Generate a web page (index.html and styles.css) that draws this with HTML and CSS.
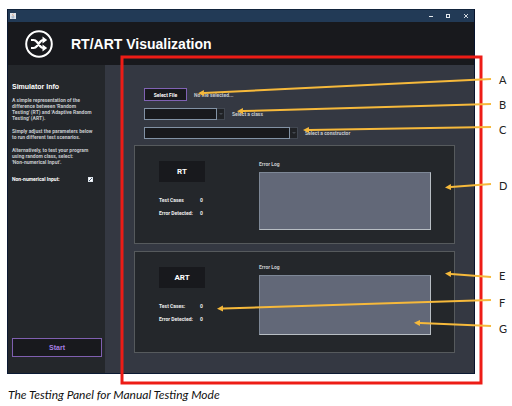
FILE: index.html
```html
<!DOCTYPE html>
<html lang="en">
<head>
<meta charset="utf-8">
<title>RT/ART Visualization</title>
<link rel="stylesheet" href="styles.css">
</head>
<body>
<figure class="figure">
  <div class="window">
    <div class="titlebar">
      <svg class="app-icon" viewBox="0 0 6 6"><rect width="6" height="6" fill="#dfe3e8"/><path d="M3.4 .6Q2.2 1.6 3 2.4T3 3.4" fill="none" stroke="#c9805c" stroke-width=".7"/><path d="M1.4 3.8H4.4M1.8 4.9H4.2" stroke="#6e8fb5" stroke-width=".6"/></svg>
      <svg class="window-controls" viewBox="0 0 42 8" fill="none" stroke="#e4e9ee"><path d="M1 4.500H5"/><rect x="18.500" y="2.500" width="3" height="3"/><path d="M36 2L40 6M40 2L36 6" stroke-width=".9"/></svg>
    </div>
    <header class="header">
      <svg class="logo" viewBox="0 0 28 28" fill="none" stroke="#fff">
        <circle cx="14" cy="14" r="12.800" stroke-width="2"/>
        <path d="M6 10H8.500Q10.500 10 12 12L15 16Q16.500 18 18.500 18H19M6 18H8.500Q10.500 18 12 16L15 12Q16.500 10 18.500 10H19" stroke-width="2.200"/>
        <path d="M17.500 6.500L22.200 10L17.500 13.500ZM17.500 14.500L22.200 18L17.500 21.500Z" fill="#fff" stroke="none"/>
      </svg>
      <h1 class="title">RT/ART Visualization</h1>
    </header>
    <div class="body">
      <aside class="sidebar">
        <h2 class="side-title">Simulator Info</h2>
        <p>A simple representation of the<br>difference between 'Random<br>Testing' (RT) and 'Adaptive Random<br>Testing' (ART).</p>
        <p>Simply adjust the parameters below<br>to run different test scenarios.</p>
        <p>Alternatively, to test your program<br>using random class, select:<br>'Non-numerical Input'.</p>
        <div class="check-row">
          <label for="non-numerical">Non-numerical Input:</label>
          <input class="check" id="non-numerical" type="checkbox" checked>
        </div>
        <button class="start" type="button">Start</button>
      </aside>
      <main class="main">
        <div class="controls">
          <div class="row"><button class="select-file" type="button">Select File</button><span>No file selected...</span></div>
          <div class="row">
            <div class="combo class-combo"><select id="class"></select><i class="arrow"></i></div>
            <label for="class">Select a class</label>
          </div>
          <div class="row">
            <div class="combo constructor-combo"><select id="constructor"></select><i class="arrow"></i></div>
            <label for="constructor">Select a constructor</label>
          </div>
        </div>
        <section class="panel">
          <div class="stats">
            <h3 class="badge">RT</h3>
            <dl><dt>Test Cases</dt><dd>0</dd><dt>Error Detected:</dt><dd>0</dd></dl>
          </div>
          <div class="log"><label for="rt-log">Error Log</label><textarea id="rt-log" readonly></textarea></div>
        </section>
        <section class="panel">
          <div class="stats">
            <h3 class="badge">ART</h3>
            <dl><dt>Test Cases:</dt><dd>0</dd><dt>Error Detected:</dt><dd>0</dd></dl>
          </div>
          <div class="log tall"><label for="art-log">Error Log</label><textarea id="art-log" readonly></textarea></div>
        </section>
      </main>
    </div>
  </div>
  <figcaption class="caption">The Testing Panel for Manual Testing Mode</figcaption>
  <svg class="annotations" viewBox="0 0 512 406">
    <defs>
      <marker id="head" markerUnits="userSpaceOnUse" markerWidth="7" markerHeight="7" refX="0" refY="3" orient="auto-start-reverse"><path d="M0 0L6 3L0 6Z" fill="#f6b93b"/></marker>
    </defs>
    <rect class="highlight" x="122" y="57" width="359" height="326"/>
    <g class="leaders">
      <path d="M204 93L491 79"/>
      <path d="M243 111L491 104"/>
      <path d="M309 130L491 127"/>
      <path d="M451 187L491 184"/>
      <path d="M451 274L491 277"/>
      <path d="M223 308.500L491 300"/>
      <path d="M420 323L491 326"/>
    </g>
    <g class="letters">
      <text x="499" y="84">A</text>
      <text x="499" y="109">B</text>
      <text x="499" y="134">C</text>
      <text x="499" y="190">D</text>
      <text x="499" y="280">E</text>
      <text x="499" y="307">F</text>
      <text x="499" y="333">G</text>
    </g>
  </svg>
</figure>
</body>
</html>
```
FILE: styles.css
```css
* { box-sizing: border-box; }
body { margin: 0; background: #fff; }
h1, h2, h3, p, dl, dd { margin: 0; }
button, select, textarea { font: inherit; border-radius: 0; margin: 0; }

.figure { position: relative; margin: 0; padding: 9px 37px 0 7px; }
.window {
  color: #c6c9cd;
  background: #343842;
  font: bold 5px/6px Roboto, sans-serif;
  border: 1px solid #0b1a33;
  border-top: 0;
  border-right-color: #07122b;
}
.titlebar {
  display: flex;
  align-items: center;
  justify-content: space-between;
  height: 13px;
  padding: 0 4px 0 2px;
  background: #223a56;
  border-top: 1px solid #12243c;
}
.app-icon { width: 6px; height: 6px; }
.window-controls { width: 42px; height: 8px; }
.header {
  display: flex;
  align-items: center;
  gap: 18px;
  height: 43px;
  padding-left: 17px;
  background: #18191d;
}
.logo { width: 28px; height: 28px; }
.title { color: #fff; font: bold 14px/20px "Liberation Sans", sans-serif; }

.body { display: flex; }
.sidebar {
  display: flex;
  flex-direction: column;
  flex: 0 0 97px;
  padding: 17px 3px 16px 4px;
  background: #24272b;
  white-space: nowrap;
}
.side-title { margin-bottom: 5px; color: #fff; font: bold 7px/10px "Liberation Sans", sans-serif; }
.sidebar p { margin-bottom: 7px; }
.check-row {
  display: flex;
  align-items: center;
  justify-content: space-between;
  margin-top: 4px;
  padding-right: 9px;
  color: #fff;
}
.check {
  appearance: none;
  width: 5px;
  height: 5px;
  margin: 0;
  background: linear-gradient(135deg, #fff 40%, #4d6178 40%, #4d6178 60%, #fff 60%);
  border: 1px solid #dfe6ed;
}
.start {
  height: 19px;
  margin-top: auto;
  padding: 0;
  color: #a77fe0;
  background: #18191d;
  border: 1px solid #7f5fb0;
  font: bold 7px/10px "Liberation Sans", sans-serif;
}

.main { flex: 1; min-width: 0; padding: 23px 19px 20px 29px; }
.controls { padding-left: 10px; margin-bottom: 6px; }
.row { display: flex; align-items: center; gap: 7px; height: 13px; margin-bottom: 6px; }
.select-file {
  width: 43px;
  height: 13px;
  padding: 0;
  color: #fff;
  background: #18191d;
  border: 1px solid #8062b4;
}
.combo { display: flex; height: 12px; }
.combo select {
  appearance: none;
  flex: 1;
  min-width: 0;
  padding: 0;
  background: #18191d;
  border: 1px solid #8292a5;
}
.class-combo { width: 81px; }
.constructor-combo { width: 154px; }
.arrow {
  display: flex;
  align-items: center;
  justify-content: center;
  width: 8px;
  background: #202226;
  border: 1px solid #424852;
  border-left: 0;
}
.arrow::after { content: ""; border: 2px solid transparent; border-top-color: #434850; border-bottom: 0; }

.panel {
  display: flex;
  gap: 54px;
  height: 99px;
  margin-bottom: 7px;
  padding: 12px 23px 0 24px;
  background: #24272b;
  border: 1px solid #565a5d;
}
.panel:last-child { height: 102px; margin-bottom: 0; }
.stats { flex: 0 0 46px; padding-top: 3px; white-space: nowrap; color: #eceded; }
.badge {
  margin-bottom: 15px;
  background: #18191d;
  color: #fff;
  text-align: center;
  font: bold 8px/21px Roboto, sans-serif;
}
.stats dl { display: grid; grid-template-columns: 1fr 5px; row-gap: 7px; }
.log { display: flex; flex-direction: column; flex: 1; padding-top: 3px; }
.log label { margin-bottom: 5px; }
.log textarea {
  width: 100%;
  height: 58px;
  padding: 0;
  resize: none;
  background: #626878;
  border: 1px solid #7d8796;
  border-right-color: #b8bec4;
  border-bottom-color: #b8bec4;
}
.log.tall { padding-top: 0; }
.log.tall textarea { height: 60px; }

.caption { padding: 14px 1px 0; color: #111; font: italic 12px/14px Lato, sans-serif; white-space: nowrap; }
.annotations { position: absolute; top: 0; left: 0; width: 100%; pointer-events: none; }
.highlight { fill: none; stroke: #ed1c16; stroke-width: 3px; }
.leaders path { fill: none; stroke: #f6b93b; stroke-width: 2px; marker-start: url(#head); }
.letters text { fill: #222; font: 11px Lato, sans-serif; }
```
